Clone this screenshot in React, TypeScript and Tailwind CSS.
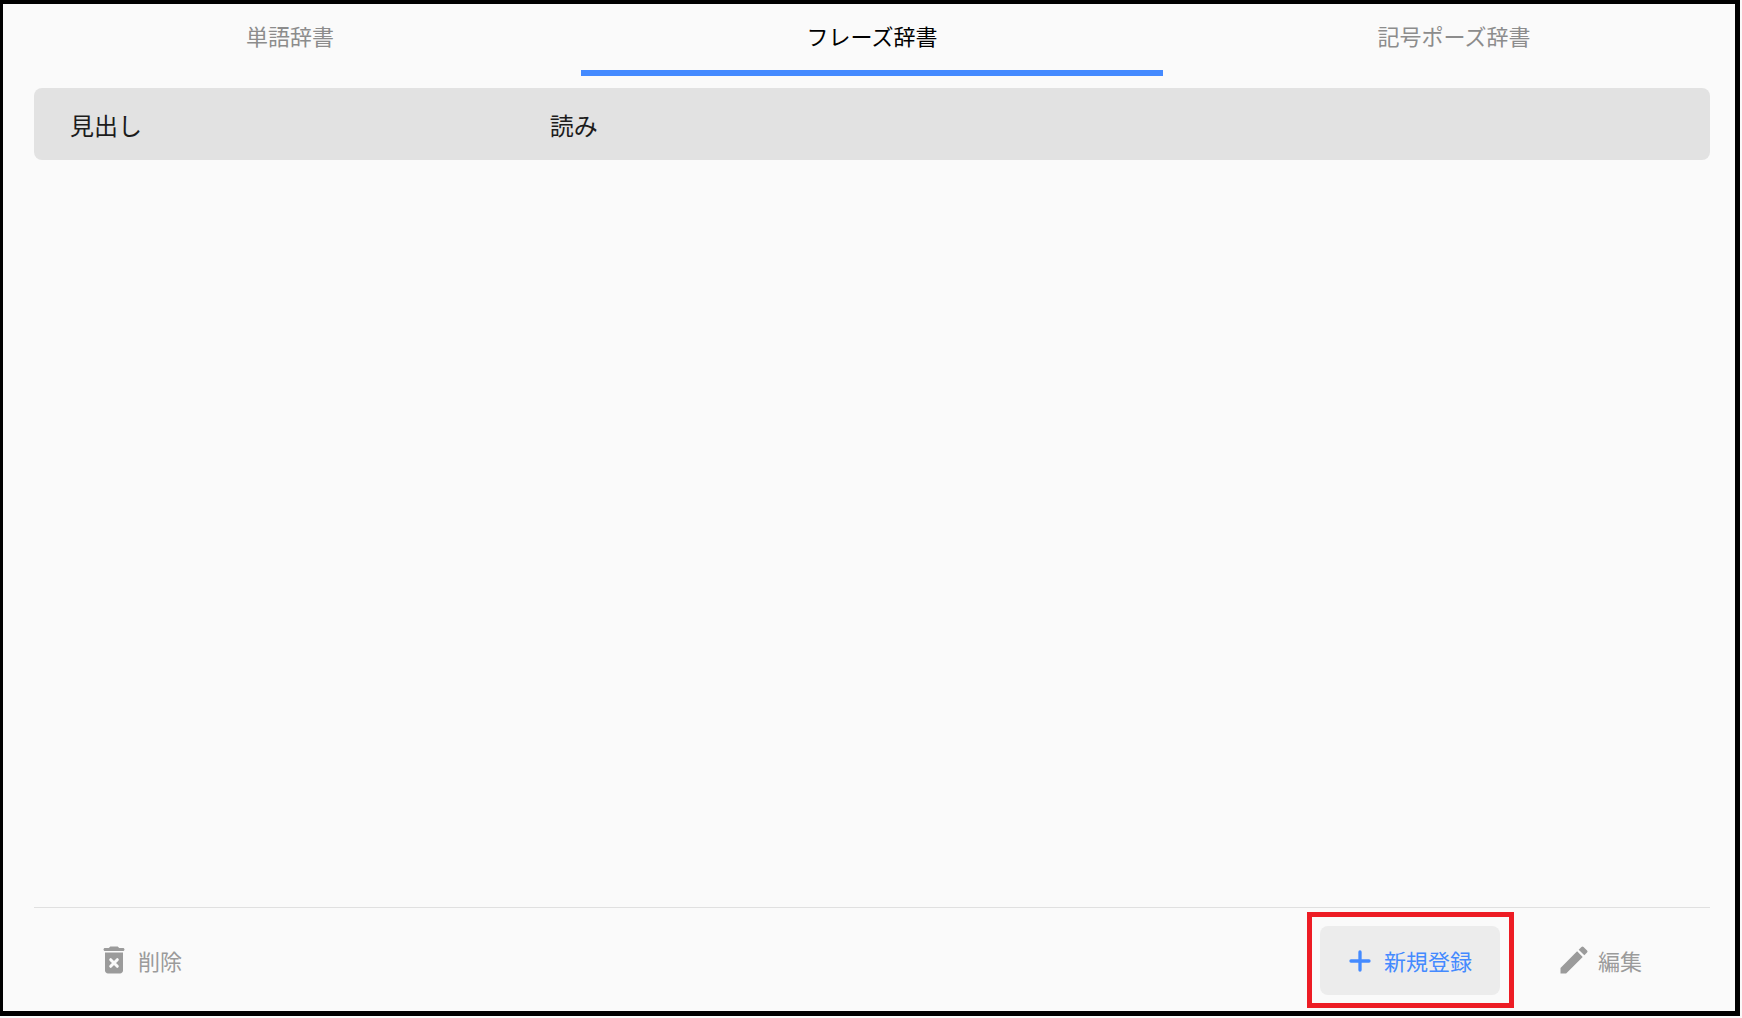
import { useState } from "react";
import type { ReactNode } from "react";
import { MdEdit } from "react-icons/md";

const TABS = ["単語辞書", "フレーズ辞書", "記号ポーズ辞書"];

function DeleteIcon() {
  return (
    <svg viewBox="0 0 24 24" className="size-9" fill="currentColor" aria-hidden="true">
      <path d="M6 19c0 1.1.9 2 2 2h8c1.1 0 2-.9 2-2V7H6v12z" />
      <path d="M15.5 4l-.71-.71c-.18-.18-.44-.29-.7-.29H9.91c-.26 0-.52.11-.7.29L8.5 4H6c-.55 0-1 .45-1 1s.45 1 1 1h12c.55 0 1-.45 1-1s-.45-1-1-1h-2.5z" />
      <path d="M9.8 11.8l4.4 4.4M14.2 11.8l-4.4 4.4" fill="none" stroke="#fafafa" strokeWidth="2" strokeLinecap="round" />
    </svg>
  );
}

function PlusIcon() {
  return (
    <svg viewBox="0 0 24 24" className="size-9" fill="none" stroke="currentColor" strokeWidth="2.2" strokeLinecap="round" aria-hidden="true">
      <path d="M12 6v12M6 12h12" />
    </svg>
  );
}

function ActionButton({ icon, label, className }: { icon: ReactNode; label: string; className: string }) {
  return (
    <button type="button" className={`flex h-[69px] items-center gap-1.5 rounded-lg pr-7 pl-[22px] text-[22px] ${className}`}>
      {icon}
      {label}
    </button>
  );
}

export default function App() {
  const [active, setActive] = useState(1);

  return (
    <div className="flex min-h-screen bg-[#fafafa] pr-0.5 pb-0.5 font-['Noto_Sans_CJK_JP',sans-serif]">
      <div className="flex min-w-0 flex-1 flex-col overflow-hidden border-5 border-t-4 border-l-3 border-black">
        <div role="tablist" className="-mr-2.5 -ml-1 grid grid-cols-3">
          {TABS.map((tab, i) => (
            <button
              key={tab}
              type="button"
              role="tab"
              aria-selected={i === active}
              onClick={() => setActive(i)}
              className={`h-[72px] border-b-6 pb-1 text-[22px] ${
                i === active ? "border-[#448aff] text-black" : "border-transparent text-[#8c8c8c]"
              }`}
            >
              {tab}
            </button>
          ))}
        </div>

        <main className="mt-3 mr-[25px] ml-[31px] flex flex-1 flex-col">
          <table className="w-full table-fixed border-separate border-spacing-0 text-left text-2xl text-[#1c1c1c]">
            <thead>
              <tr className="h-[72px]">
                <th scope="col" className="w-2/7 rounded-l-lg bg-[#e2e2e2] pt-0.5 pl-9 font-normal">
                  見出し
                </th>
                <th scope="col" className="rounded-r-lg bg-[#e2e2e2] pt-0.5 pl-[37px] font-normal">
                  読み
                </th>
              </tr>
            </thead>
          </table>

          <footer className="mt-auto flex items-center border-t border-[#e0e0e0] px-10 pt-1 pb-[3px]">
            <ActionButton icon={<DeleteIcon />} label="削除" className="mr-auto text-[#9b9b9b]" />
            <div className="border-5 border-[#ed1c24] pt-[9px] pr-[9px] pb-2 pl-2">
              <ActionButton icon={<PlusIcon />} label="新規登録" className="bg-[#ececec] text-[#448aff]" />
            </div>
            <div className="ml-5">
              <ActionButton icon={<MdEdit className="size-9" aria-hidden="true" />} label="編集" className="text-[#9b9b9b]" />
            </div>
          </footer>
        </main>
      </div>
    </div>
  );
}
